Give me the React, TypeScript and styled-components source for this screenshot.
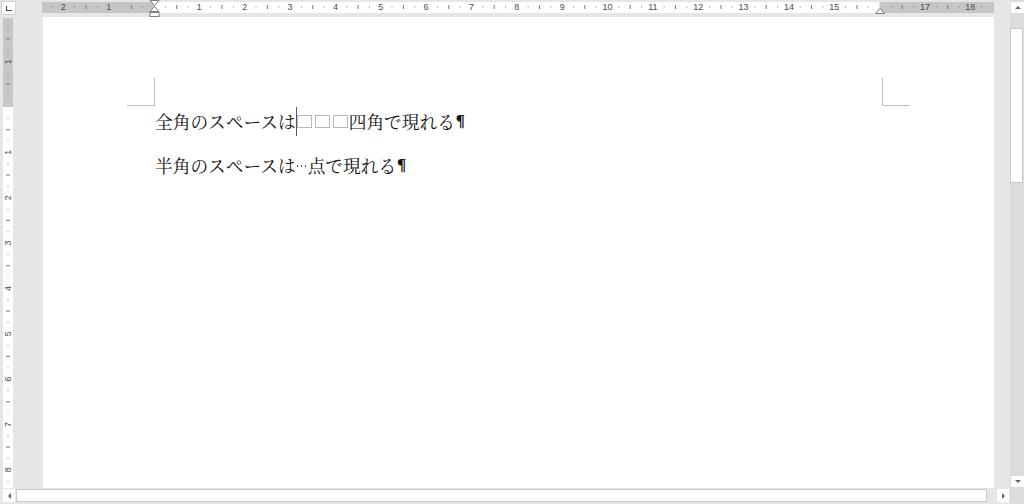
import styled, { createGlobalStyle } from "styled-components";

const CM = 45.35;

const GlobalStyle = createGlobalStyle`
  html, body {
    margin: 0;
    padding: 0;
    background: #e6e6e6;
    overflow: hidden;
  }
  #root {
    width: 1024px;
    height: 504px;
  }
`;

const Window = styled.div`
  width: 1024px;
  height: 504px;
  display: grid;
  grid-template-columns: 1010px 14px;
  grid-template-rows: 488px 16px;
  background: #e6e6e6;
  font-family: "Liberation Sans", Arial, sans-serif;
`;

const Workspace = styled.div`
  display: grid;
  grid-template-columns: 42px 952px 16px;
  grid-template-rows: 17px 471px;
  min-height: 0;
`;

const TabCorner = styled.div`
  padding: 1px;
`;

const TabButton = styled.div`
  width: 15px;
  height: 14px;
  box-sizing: border-box;
  background: #fff;
  border: 1px solid #d4d4d4;
  display: flex;
  align-items: center;
  justify-content: center;
`;

const TabGlyph = styled.span`
  width: 5px;
  height: 4px;
  border-left: 1.5px solid #444;
  border-bottom: 1.5px solid #444;
  margin-top: 1px;
`;

const RulerCell = styled.div`
  svg {
    display: block;
  }
`;

const SideRulerCell = styled.div`
  padding: 1px 0 0 3px;
  svg {
    display: block;
  }
`;

const Page = styled.div`
  margin-left: 1px;
  background: #fff;
  padding: 61px 84px 0;
  overflow: hidden;
`;

const MarginRow = styled.div`
  display: flex;
  justify-content: space-between;
  height: 28px;
`;

const CornerMark = styled.div<{ $side: "left" | "right" }>`
  width: 28px;
  height: 28px;
  box-sizing: border-box;
  border-bottom: 1px solid #bdbdbd;
  ${(p) =>
    p.$side === "left"
      ? "border-right: 1px solid #bdbdbd;"
      : "border-left: 1px solid #bdbdbd;"}
`;

const TextArea = styled.div`
  padding: 0 28px;
  color: #111;
  font-family: "Noto Serif CJK JP", "Noto Sans CJK JP", serif;
`;

const Line = styled.div`
  display: flex;
  align-items: center;
  height: 30px;
  font-size: 17.7px;
  white-space: pre;
  & + & {
    margin-top: 14px;
  }
`;

const Caret = styled.span`
  align-self: flex-end;
  width: 1px;
  height: 29px;
  margin-right: -1px;
  background: #5a5a5a;
`;

const FullSpace = styled.span`
  flex: none;
  width: 15px;
  height: 13px;
  box-sizing: border-box;
  margin: 0 1px 0 1.7px;
  border: 1px solid #b8b8b8;
`;

const HalfSpace = styled.span`
  flex: none;
  width: 4px;
  height: 4px;
  display: flex;
  align-items: center;
  justify-content: center;
  transform: translateY(1px);
  &::before {
    content: "";
    width: 1.6px;
    height: 1.6px;
    border-radius: 50%;
    background: #333;
  }
`;

const Pilcrow = styled.span`
  margin-left: 1px;
  font-family: "Liberation Serif", "Times New Roman", serif;
  font-weight: 700;
  font-size: 17px;
  color: #111;
`;

const VScroll = styled.div`
  grid-row: 1 / span 2;
  grid-column: 2;
  background: #dcdcdc;
  display: flex;
  flex-direction: column;
  padding: 2px 1px 17px 0;
`;

const HScroll = styled.div`
  grid-row: 2;
  grid-column: 1;
  display: flex;
  align-items: flex-start;
  padding: 1px 1px 0 2px;
`;

const TrackGap = styled.div<{ $size?: number }>`
  flex: ${(p) => (p.$size ? `0 0 ${p.$size}px` : "1")};
`;

const Thumb = styled.div<{ $length?: number }>`
  box-sizing: border-box;
  background: #fff;
  border: 1px solid #c8c8c8;
  ${(p) => (p.$length ? `height: ${p.$length}px;` : "flex: 1; height: 13px;")}
`;

type Dir = "up" | "down" | "left" | "right";

const arrow: Record<Dir, string> = {
  up: "border-left: 3px solid transparent; border-right: 3px solid transparent; border-bottom: 3px solid #666;",
  down: "border-left: 3px solid transparent; border-right: 3px solid transparent; border-top: 3px solid #666;",
  left: "border-top: 3px solid transparent; border-bottom: 3px solid transparent; border-right: 3px solid #666;",
  right: "border-top: 3px solid transparent; border-bottom: 3px solid transparent; border-left: 3px solid #666;",
};

const ScrollButton = styled.div<{ $dir: Dir }>`
  flex: none;
  box-sizing: border-box;
  width: ${(p) => (p.$dir === "up" || p.$dir === "down" ? "13px" : "12px")};
  height: ${(p) => (p.$dir === "up" || p.$dir === "down" ? "11px" : "13px")};
  margin-left: ${(p) => (p.$dir === "right" ? "10px" : "1px")};
  margin-right: ${(p) => (p.$dir === "left" ? "1px" : "0")};
  background: #fff;
  display: flex;
  align-items: center;
  justify-content: center;
  &::after {
    content: "";
    width: 0;
    height: 0;
    ${(p) => arrow[p.$dir]}
  }
`;

const HRuler = () => {
  const W = 952;
  const zero = 112;
  const marks = [];
  for (let q = -12; q <= 76; q++) {
    const cm = q / 4;
    const x = zero + cm * CM;
    if (x < 3 || x > W - 3) continue;
    if (q % 4 === 0) {
      if (cm === 0 || cm === 16) continue;
      marks.push(
        <text key={q} x={x} y={9.5} textAnchor="middle" fontSize="9" fill="#4a4a4a" fontFamily="Liberation Sans, sans-serif">
          {Math.abs(cm)}
        </text>
      );
    } else if (q % 2 === 0) {
      marks.push(<rect key={q} x={x - 0.5} y={5} width={1} height={4} fill="#7a7a7a" />);
    } else {
      marks.push(<rect key={q} x={x - 0.5} y={6.5} width={1} height={1} fill="#7a7a7a" />);
    }
  }
  const right = zero + 16 * CM;
  return (
    <svg width={W} height={17}>
      <rect x={0} y={2} width={zero} height={11} fill="#c6c6c6" />
      <rect x={zero} y={2} width={right - zero} height={11} fill="#fff" />
      <rect x={right} y={2} width={W - right} height={11} fill="#c6c6c6" />
      {marks}
      <g fill="#fff" stroke="#7d7d7d" strokeWidth="1">
        <path d={`M${zero - 4} 0.5 H${zero + 5} L${zero + 0.5} 5.5 Z`} />
        <path d={`M${zero + 0.5} 6.5 L${zero + 5} 11.5 H${zero - 4} Z`} />
        <rect x={zero - 4} y={12.5} width={9} height={4} />
        <path d={`M${right + 0.5} 8.5 L${right + 5} 13.5 H${right - 4} Z`} />
      </g>
    </svg>
  );
};

const VRuler = () => {
  const H = 470;
  const zero = 89;
  const marks = [];
  for (let q = -8; q <= 36; q++) {
    const cm = q / 4;
    const y = zero + cm * CM;
    if (y < 3 || y > H - 3) continue;
    if (q % 4 === 0) {
      if (cm === 0) continue;
      marks.push(
        <text
          key={q}
          x={5}
          y={y}
          transform={`rotate(-90 5 ${y})`}
          textAnchor="middle"
          dominantBaseline="central"
          fontSize="9"
          fill="#4a4a4a"
          fontFamily="Liberation Sans, sans-serif"
        >
          {Math.abs(cm)}
        </text>
      );
    } else if (q % 2 === 0) {
      marks.push(<rect key={q} x={3} y={y - 0.5} width={4} height={1} fill="#7a7a7a" />);
    } else {
      marks.push(<rect key={q} x={4.5} y={y - 0.5} width={1} height={1} fill="#7a7a7a" />);
    }
  }
  return (
    <svg width={10} height={H}>
      <rect x={0} y={0} width={10} height={zero} fill="#c6c6c6" />
      <rect x={0} y={zero} width={10} height={H - zero} fill="#fff" />
      {marks}
    </svg>
  );
};

const App = () => {
  return (
    <>
      <GlobalStyle />
      <Window>
        <Workspace>
          <TabCorner>
            <TabButton>
              <TabGlyph />
            </TabButton>
          </TabCorner>
          <RulerCell>
            <HRuler />
          </RulerCell>
          <div />
          <SideRulerCell>
            <VRuler />
          </SideRulerCell>
          <Page>
            <MarginRow>
              <CornerMark $side="left" />
              <CornerMark $side="right" />
            </MarginRow>
            <TextArea>
              <Line>
                全角のスペースは
                <Caret />
                <FullSpace />
                <FullSpace />
                <FullSpace />
                四角で現れる
                <Pilcrow>¶</Pilcrow>
              </Line>
              <Line>
                半角のスペースは
                <HalfSpace />
                <HalfSpace />
                <HalfSpace />
                点で現れる
                <Pilcrow>¶</Pilcrow>
              </Line>
            </TextArea>
          </Page>
          <div />
        </Workspace>
        <VScroll>
          <ScrollButton $dir="up" />
          <TrackGap $size={15} />
          <Thumb $length={155} />
          <TrackGap />
          <ScrollButton $dir="down" />
        </VScroll>
        <HScroll>
          <ScrollButton $dir="left" />
          <Thumb />
          <ScrollButton $dir="right" />
        </HScroll>
      </Window>
    </>
  );
};

export default App;
